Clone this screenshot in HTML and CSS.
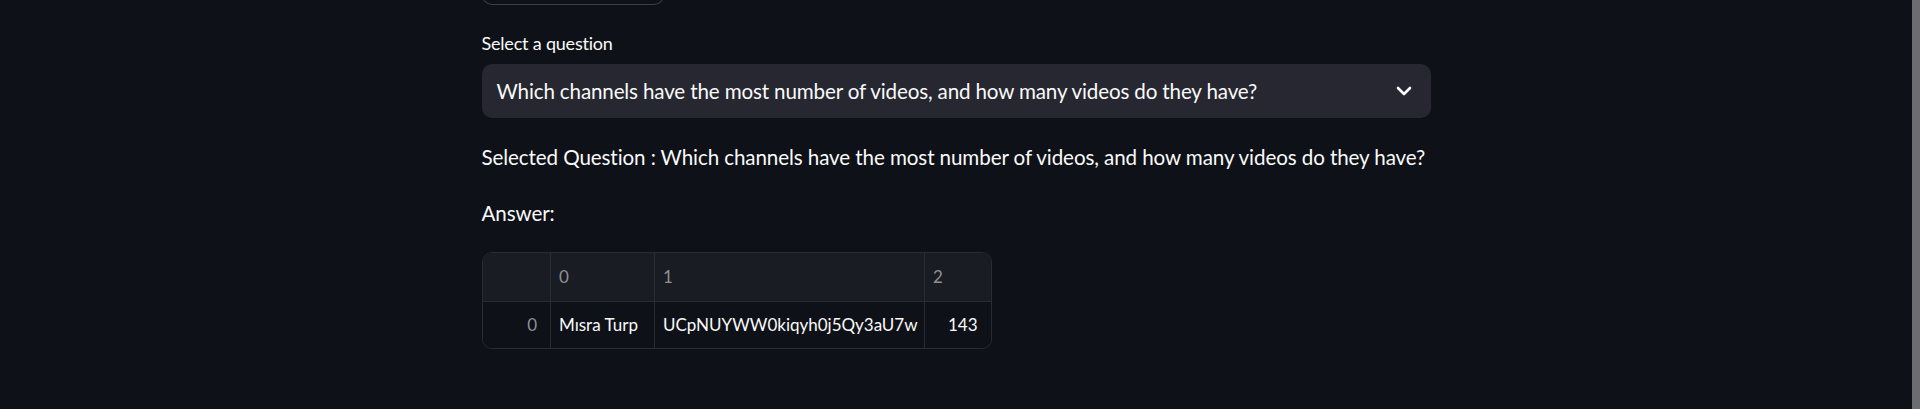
FILE: index.html
```html
<!DOCTYPE html>
<html lang="en">
<head>
<meta charset="utf-8">
<title>Questions</title>
<link rel="stylesheet" href="styles.css">
</head>
<body>
<div class="page">
  <main class="main">
    <div class="block">
      <div class="btn-stub"></div>
      <div class="field">
        <div class="label">Select a question</div>
        <div class="select">
          <span class="select-value">Which channels have the most number of videos, and how many videos do they have?</span>
          <svg class="chev" width="16" height="10" viewBox="0 0 16 10"><path d="M2 2 L8 8 L14 2" fill="none" stroke="#fafafa" stroke-width="2.6" stroke-linecap="round" stroke-linejoin="round"/></svg>
        </div>
      </div>
      <p class="md">Selected Question : Which channels have the most number of videos, and how many videos do they have?</p>
      <p class="md">Answer:</p>
      <div class="df">
        <table class="grid">
          <colgroup>
            <col class="c-idx"><col class="c0"><col class="c1"><col class="c2">
          </colgroup>
          <thead>
            <tr><th></th><th>0</th><th>1</th><th>2</th></tr>
          </thead>
          <tbody>
            <tr><td class="num idx">0</td><td>Mısra Turp</td><td>UCpNUYWW0kiqyh0j5Qy3aU7w</td><td class="num">143</td></tr>
          </tbody>
        </table>
      </div>
    </div>
  </main>
  <div class="scrollbar"></div>
</div>
</body>
</html>
```

FILE: styles.css
```css
html, body {
  margin: 0;
  padding: 0;
  height: 100%;
  background: #0e1117;
  overflow: hidden;
}

.page {
  display: flex;
  height: 409px;
  font-family: "Lato", "Noto Sans", sans-serif;
  color: #fafafa;
}

.main {
  flex: 1;
  display: flex;
  justify-content: center;
}

.block {
  width: 949px;
  display: flex;
  flex-direction: column;
  gap: 21.6px;
}

.btn-stub {
  height: 54px;
  width: 182px;
  margin-top: -49px;
  box-sizing: border-box;
  border: 1px solid rgba(250, 250, 250, 0.2);
  border-radius: 10px;
  background: #0e1117;
}

.field {
  display: flex;
  flex-direction: column;
}

.label {
  height: 32.4px;
  margin-bottom: 5.4px;
  display: flex;
  align-items: center;
  font-size: 18px;
  letter-spacing: -0.2px;
}

.select {
  height: 54px;
  box-sizing: border-box;
  background: #262730;
  border-radius: 10px;
  display: flex;
  align-items: center;
  justify-content: space-between;
  padding: 0 19px 0 15px;
}

.select-value {
  font-size: 20.6px;
  letter-spacing: -0.15px;
}

.chev {
  display: block;
}

.md {
  margin: 0;
  font-size: 20.6px;
  line-height: 34.5px;
  letter-spacing: -0.1px;
}

.df {
  width: 510px;
  box-sizing: border-box;
  border: 1px solid #2a2c33;
  border-radius: 10px;
  overflow: hidden;
}

.grid {
  border-collapse: collapse;
  table-layout: fixed;
  width: 508px;
  font-size: 17px;
}

.grid th, .grid td {
  box-sizing: border-box;
  padding: 0 8px;
  text-align: left;
  white-space: nowrap;
  border-right: 1px solid #2a2c33;
  font-weight: 400;
}

.grid th:last-child, .grid td:last-child {
  border-right: none;
}

.grid thead tr {
  height: 48px;
  background: #1a1c24;
  color: #8e9096;
}

.grid thead th {
  border-bottom: 1px solid #2a2c33;
}

.grid tbody tr {
  height: 47px;
  background: #0e1117;
  color: #fafafa;
}

.c-idx { width: 68px; }
.c0 { width: 104px; }
.c1 { width: 270px; }
.c2 { width: 66px; }

.grid .num {
  text-align: right;
  padding-right: 13px;
}

.grid .idx {
  color: #8e9096;
}

.scrollbar {
  width: 8px;
  flex: none;
  background: #6c6d71;
}
```
